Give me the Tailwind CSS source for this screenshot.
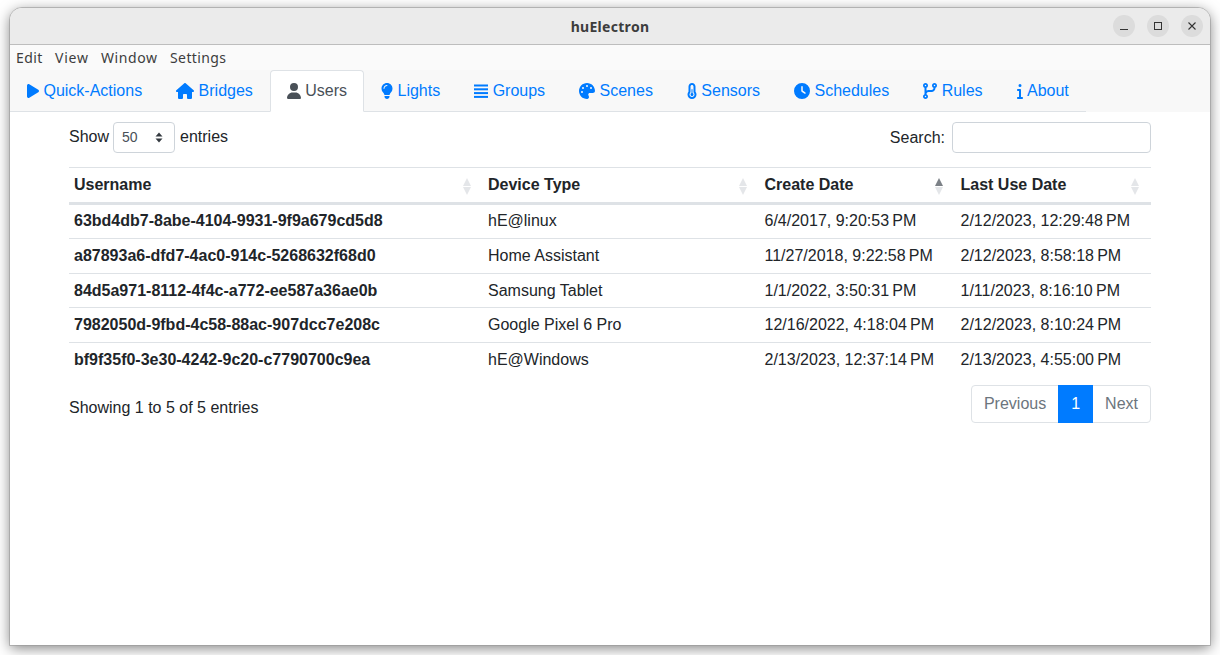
<!DOCTYPE html>
<html lang="en">
<head>
    <meta charset="UTF-8">
    <title>huElectron</title>
    <script src="https://cdn.jsdelivr.net/npm/@tailwindcss/browser@4"></script>
</head>
<body class="bg-white h-[655px] overflow-hidden pt-[8px] px-[10px] font-['Liberation_Sans',sans-serif] text-[16px] text-[#212529]">
    <div class="h-[637px] rounded-t-[12px] overflow-hidden bg-white shadow-[0_3px_14px_rgba(0,0,0,0.5)] outline outline-1 outline-[#9a9a9a]/60">
        <!-- title bar -->
        <div class="h-[37px] bg-[#ebebeb] border-b border-[#bdbdbd] flex items-center justify-end relative pr-[7px] gap-[12px]">
            <span class="absolute inset-x-0 text-center font-['Noto_Sans',sans-serif] font-bold text-[14px] tracking-[0.3px] text-[#3d3d3d] top-[8px]">huElectron</span>
            <span class="w-[22px] h-[22px] rounded-full bg-[#dcdcdc] flex items-center justify-center">
                <svg width="10" height="10" viewBox="0 0 10 10"><rect x="1" y="8" width="8" height="1" fill="#333"/></svg>
            </span>
            <span class="w-[22px] h-[22px] rounded-full bg-[#dcdcdc] flex items-center justify-center">
                <svg width="10" height="10" viewBox="0 0 10 10"><rect x="1.5" y="1.5" width="7" height="7" fill="none" stroke="#333"/></svg>
            </span>
            <span class="w-[22px] h-[22px] rounded-full bg-[#dcdcdc] flex items-center justify-center">
                <svg width="10" height="10" viewBox="0 0 10 10"><path d="M1.5 1.5l7 7M8.5 1.5l-7 7" stroke="#333" stroke-width="1.1"/></svg>
            </span>
        </div>

        <!-- menu bar -->
        <div class="h-[25px] bg-[#fafafa] flex items-center pl-[6px] font-['Noto_Sans',sans-serif] text-[14px] tracking-[0.4px] text-[#3d3d3d]">
            <span class="w-[39px]">Edit</span><span class="w-[46px] tracking-[0.8px]">View</span><span class="w-[69px] tracking-[0.6px]">Window</span><span>Settings</span>
        </div>

        <!-- tabs -->
        <div class="bg-[#f8f8f8] h-[42px]">
            <ul class="flex w-[1076px] h-[42px] border-b border-[#dee2e6]">
                <li><a class="flex items-center h-[42px] px-[17px] text-[#007bff]"><svg class="h-[16px] w-[12px] mr-[4.45px] fill-current" viewBox="0 0 384 512"><path d="M73 39c-14.8-9.1-33.4-9.4-48.5-.9S0 62.6 0 80V432c0 17.4 9.4 33.4 24.5 41.9s33.7 8.1 48.5-.9L361 297c14.3-8.7 23-24.2 23-41s-8.7-32.2-23-41L73 39z"/></svg>Quick-Actions</a></li>
                <li><a class="flex items-center h-[42px] px-[17px] text-[#007bff]"><svg class="h-[16px] w-[18px] mr-[4.45px] fill-current" viewBox="0 0 576 512"><path d="M575.8 255.5c0 18-15 32.1-32 32.1h-32l.7 160.2c0 2.7-.2 5.4-.5 8.1V472c0 22.1-17.9 40-40 40H456c-1.1 0-2.2 0-3.3-.1c-1.4 .1-2.8 .1-4.2 .1H416 392c-22.1 0-40-17.9-40-40V448 384c0-17.7-14.3-32-32-32H256c-17.7 0-32 14.3-32 32v64 24c0 22.1-17.9 40-40 40H160 128.1c-1.5 0-3-.1-4.5-.2c-1.2 .1-2.4 .2-3.6 .2H104c-22.1 0-40-17.9-40-40V360c0-.9 0-1.9 .1-2.8V287.6H32c-18 0-32-14-32-32.1c0-9 3-17 10-24L266.4 8c7-7 15-8 22-8s15 2 21 7L564.8 231.5c8 7 12 15 11 24z"/></svg>Bridges</a></li>
                <li><a class="flex items-center h-[42px] px-[16px] text-[#495057] bg-white border border-[#dee2e6] border-b-white rounded-t-[4px]"><svg class="h-[16px] w-[14px] mr-[4.45px] fill-current" viewBox="0 0 448 512"><path d="M224 256A128 128 0 1 0 224 0a128 128 0 1 0 0 256zm-45.7 48C79.8 304 0 383.8 0 482.3C0 498.7 13.3 512 29.7 512H418.3c16.4 0 29.7-13.3 29.7-29.7C448 383.8 368.2 304 269.7 304H178.3z"/></svg>Users</a></li>
                <li><a class="flex items-center h-[42px] px-[17px] text-[#007bff]"><svg class="h-[16px] w-[12px] mr-[4.45px] fill-current" viewBox="0 0 384 512"><path d="M272 384c9.6-31.9 29.5-59.1 49.2-86.2l0 0c5.2-7.1 10.4-14.2 15.4-21.4c19.8-28.5 31.4-63 31.4-100.3C368 78.8 289.2 0 192 0S16 78.8 16 176c0 37.3 11.6 71.9 31.4 100.3c5 7.2 10.2 14.3 15.4 21.4l0 0c19.8 27.1 39.7 54.4 49.2 86.2H272zM192 512c44.2 0 80-35.8 80-80V416H112v16c0 44.2 35.8 80 80 80zM112 176c0 8.8-7.2 16-16 16s-16-7.2-16-16c0-61.9 50.1-112 112-112c8.8 0 16 7.2 16 16s-7.2 16-16 16c-44.2 0-80 35.8-80 80z"/></svg>Lights</a></li>
                <li><a class="flex items-center h-[42px] px-[17px] text-[#007bff]"><svg class="h-[16px] w-[14px] mr-[4.45px] fill-current" viewBox="0 0 14 16"><rect y="1.500" width="14" height="2"/><rect y="5.300" width="14" height="2"/><rect y="9.100" width="14" height="2"/><rect y="12.900" width="14" height="2"/></svg>Groups</a></li>
                <li><a class="flex items-center h-[42px] px-[17px] text-[#007bff]"><svg class="h-[16px] w-[16px] mr-[4.45px] fill-current" viewBox="0 0 512 512"><path d="M512 256c0 .9 0 1.8 0 2.7c-.4 36.5-33.6 61.3-70.1 61.3H344c-26.5 0-48 21.5-48 48c0 3.4 .4 6.7 1 9.9c2.1 10.2 6.5 20 10.8 29.9c6.1 13.8 12.1 27.5 12.1 42c0 31.8-21.6 60.7-53.4 62c-3.5 .1-7 .2-10.6 .2C114.6 512 0 397.4 0 256S114.6 0 256 0S512 114.6 512 256zM128 288a32 32 0 1 0 -64 0 32 32 0 1 0 64 0zm0-96a32 32 0 1 0 0-64 32 32 0 1 0 0 64zM288 96a32 32 0 1 0 -64 0 32 32 0 1 0 64 0zm96 96a32 32 0 1 0 0-64 32 32 0 1 0 0 64z"/></svg>Scenes</a></li>
                <li><a class="flex items-center h-[42px] px-[17px] text-[#007bff]"><svg class="h-[16px] w-[10px] mr-[4.45px] fill-current" viewBox="0 0 320 512"><path d="M160 64c-26.5 0-48 21.5-48 48V276.5c0 17.3-7.1 31.9-15.3 42.5C86.2 332.6 80 349.5 80 368c0 44.2 35.8 80 80 80s80-35.8 80-80c0-18.5-6.2-35.4-16.7-48.9c-8.2-10.6-15.3-25.2-15.3-42.5V112c0-26.5-21.5-48-48-48zM48 112C48 50.2 98.1 0 160 0s112 50.1 112 112V276.5c0 .1 .1 .3 .2 .6c.2 .6 .8 1.6 1.7 2.8c18.9 24.4 30.1 55 30.1 88.1c0 79.5-64.5 144-144 144S16 447.5 16 368c0-33.2 11.2-63.8 30.1-88.1c.9-1.2 1.5-2.2 1.7-2.8c.1-.3 .2-.5 .2-.6V112zM208 368c0 26.5-21.5 48-48 48s-48-21.5-48-48c0-20.9 13.4-38.7 32-45.3V208c0-8.8 7.2-16 16-16s16 7.2 16 16V322.7c18.6 6.6 32 24.4 32 45.3z"/></svg>Sensors</a></li>
                <li><a class="flex items-center h-[42px] px-[17px] text-[#007bff]"><svg class="h-[16px] w-[16px] mr-[4.45px] fill-current" viewBox="0 0 512 512"><path d="M256 0a256 256 0 1 1 0 512A256 256 0 1 1 256 0zM232 120V256c0 8 4 15.5 10.7 20l96 64c11 7.4 25.9 4.4 33.3-6.7s4.4-25.9-6.7-33.3L280 243.2V120c0-13.3-10.7-24-24-24s-24 10.7-24 24z"/></svg>Schedules</a></li>
                <li><a class="flex items-center h-[42px] px-[17px] text-[#007bff]"><svg class="h-[16px] w-[14px] mr-[4.45px] fill-current" viewBox="0 0 448 512"><path d="M80 104a24 24 0 1 0 0-48 24 24 0 1 0 0 48zm80-24c0 32.8-19.7 61-48 73.3v87.8c18.8-10.9 40.7-17.1 64-17.1h96c35.3 0 64-28.7 64-64v-6.7C307.7 141 288 112.8 288 80c0-44.2 35.8-80 80-80s80 35.8 80 80c0 32.8-19.7 61-48 73.3V160c0 70.7-57.3 128-128 128H176c-35.3 0-64 28.7-64 64v6.7c28.3 12.3 48 40.5 48 73.3c0 44.2-35.8 80-80 80s-80-35.8-80-80c0-32.8 19.7-61 48-73.3V352 153.3C19.7 141 0 112.8 0 80C0 35.8 35.8 0 80 0s80 35.8 80 80zm232 0a24 24 0 1 0 -48 0 24 24 0 1 0 48 0zM80 456a24 24 0 1 0 0-48 24 24 0 1 0 0 48z"/></svg>Rules</a></li>
                <li><a class="flex items-center h-[42px] px-[17px] text-[#007bff]"><svg class="h-[16px] w-[6px] mr-[4.45px] fill-current" viewBox="0 0 192 512"><path d="M48 80a48 48 0 1 1 96 0A48 48 0 1 1 48 80zM0 224c0-17.7 14.3-32 32-32H96c17.7 0 32 14.3 32 32V448h32c17.7 0 32 14.3 32 32s-14.3 32-32 32H32c-17.7 0-32-14.3-32-32s14.3-32 32-32H64V256H32c-17.7 0-32-14.3-32-32z"/></svg>About</a></li>
            </ul>
        </div>

        <!-- users table -->
        <div class="px-[59px] pt-[10px]">
            <div class="flex justify-between items-center h-[31px]">
                <label class="flex items-center gap-[4px]"><span class="relative -top-[1px]">Show</span>
                    <span class="w-[62px] h-[31px] border border-[#ced4da] rounded-[4px] flex items-center justify-between pl-[8px] pr-[11px] text-[14px] text-[#495057]">50
                        <svg width="8" height="11" viewBox="0 0 8 11"><path d="M4 .5l3.5 4h-7zM4 10.500L.5 6.500h7z" fill="#343a40"/></svg>
                    </span>
                    <span class="ml-[1px] relative -top-[1px]">entries</span>
                </label>
                <label class="flex items-center gap-[7px]">Search:
                    <span class="w-[199px] h-[31px] border border-[#ced4da] rounded-[4px] bg-white"></span>
                </label>
            </div>

            <table class="w-[1082px] table-fixed border-collapse mt-[14px]">
                <colgroup><col class="w-[414px]"><col class="w-[276.5px]"><col class="w-[196px]"><col class="w-[195.5px]"></colgroup>
                <thead>
                    <tr class="h-[36.3px] font-bold text-left border-t border-b-[3px] border-t-[#dee2e6] border-b-[#dee2e6]">
                        <th class="pl-[5px] relative">Username<svg class="absolute right-[12.5px] top-[10px]" width="8" height="17" viewBox="0 0 8 17"><path d="M4 0l4 8H0zM4 17l4-8H0z" fill="#e4e6e9"/></svg></th>
                        <th class="pl-[5px] relative">Device Type<svg class="absolute right-[12.5px] top-[10px]" width="8" height="17" viewBox="0 0 8 17"><path d="M4 0l4 8H0zM4 17l4-8H0z" fill="#e4e6e9"/></svg></th>
                        <th class="pl-[5px] relative">Create Date<svg class="absolute right-[12.5px] top-[10px]" width="8" height="17" viewBox="0 0 8 17"><path d="M4 0l4 8H0z" fill="#7c8187"/><path d="M4 17l4-8H0z" fill="#e4e6e9"/></svg></th>
                        <th class="pl-[5px] relative">Last Use Date<svg class="absolute right-[12.5px] top-[10px]" width="8" height="17" viewBox="0 0 8 17"><path d="M4 0l4 8H0zM4 17l4-8H0z" fill="#e4e6e9"/></svg></th>
                    </tr>
                </thead>
                <tbody>
                    <tr class="h-[34.67px]">
                        <td class="pl-[5px] pb-[1px] font-bold">63bd4db7-8abe-4104-9931-9f9a679cd5d8</td>
                        <td class="pl-[5px] pb-[1px]">hE@linux</td>
                        <td class="pl-[5px] pb-[1px]">6/4/2017, 9:20:53&#8239;PM</td>
                        <td class="pl-[5px] pb-[1px]">2/12/2023, 12:29:48&#8239;PM</td>
                    </tr>
                    <tr class="h-[34.67px] border-t border-[#dee2e6]">
                        <td class="pl-[5px] font-bold">a87893a6-dfd7-4ac0-914c-5268632f68d0</td>
                        <td class="pl-[5px]">Home Assistant</td>
                        <td class="pl-[5px]">11/27/2018, 9:22:58&#8239;PM</td>
                        <td class="pl-[5px]">2/12/2023, 8:58:18&#8239;PM</td>
                    </tr>
                    <tr class="h-[34.67px] border-t border-[#dee2e6]">
                        <td class="pl-[5px] pt-[1px] font-bold">84d5a971-8112-4f4c-a772-ee587a36ae0b</td>
                        <td class="pl-[5px] pt-[1px]">Samsung Tablet</td>
                        <td class="pl-[5px] pt-[1px]">1/1/2022, 3:50:31&#8239;PM</td>
                        <td class="pl-[5px] pt-[1px]">1/11/2023, 8:16:10&#8239;PM</td>
                    </tr>
                    <tr class="h-[34.67px] border-t border-[#dee2e6]">
                        <td class="pl-[5px] font-bold">7982050d-9fbd-4c58-88ac-907dcc7e208c</td>
                        <td class="pl-[5px]">Google Pixel 6 Pro</td>
                        <td class="pl-[5px]">12/16/2022, 4:18:04&#8239;PM</td>
                        <td class="pl-[5px]">2/12/2023, 8:10:24&#8239;PM</td>
                    </tr>
                    <tr class="h-[34.67px] border-t border-[#dee2e6]">
                        <td class="pl-[5px] font-bold">bf9f35f0-3e30-4242-9c20-c7790700c9ea</td>
                        <td class="pl-[5px]">hE@Windows</td>
                        <td class="pl-[5px]">2/13/2023, 12:37:14&#8239;PM</td>
                        <td class="pl-[5px]">2/13/2023, 4:55:00&#8239;PM</td>
                    </tr>
                </tbody>
            </table>

            <div class="flex justify-between items-start mt-[8px]">
                <div class="pt-[11px]">Showing 1 to 5 of 5 entries</div>
                <div class="flex h-[38px] border border-[#dee2e6] rounded-[4px] text-[#6c757d]">
                    <span class="flex items-center px-[12px]">Previous</span>
                    <span class="flex items-center px-[13px] -my-[1px] bg-[#007bff] text-white">1</span>
                    <span class="flex items-center px-[12px]">Next</span>
                </div>
            </div>
        </div>
    </div>
</body>
</html>
